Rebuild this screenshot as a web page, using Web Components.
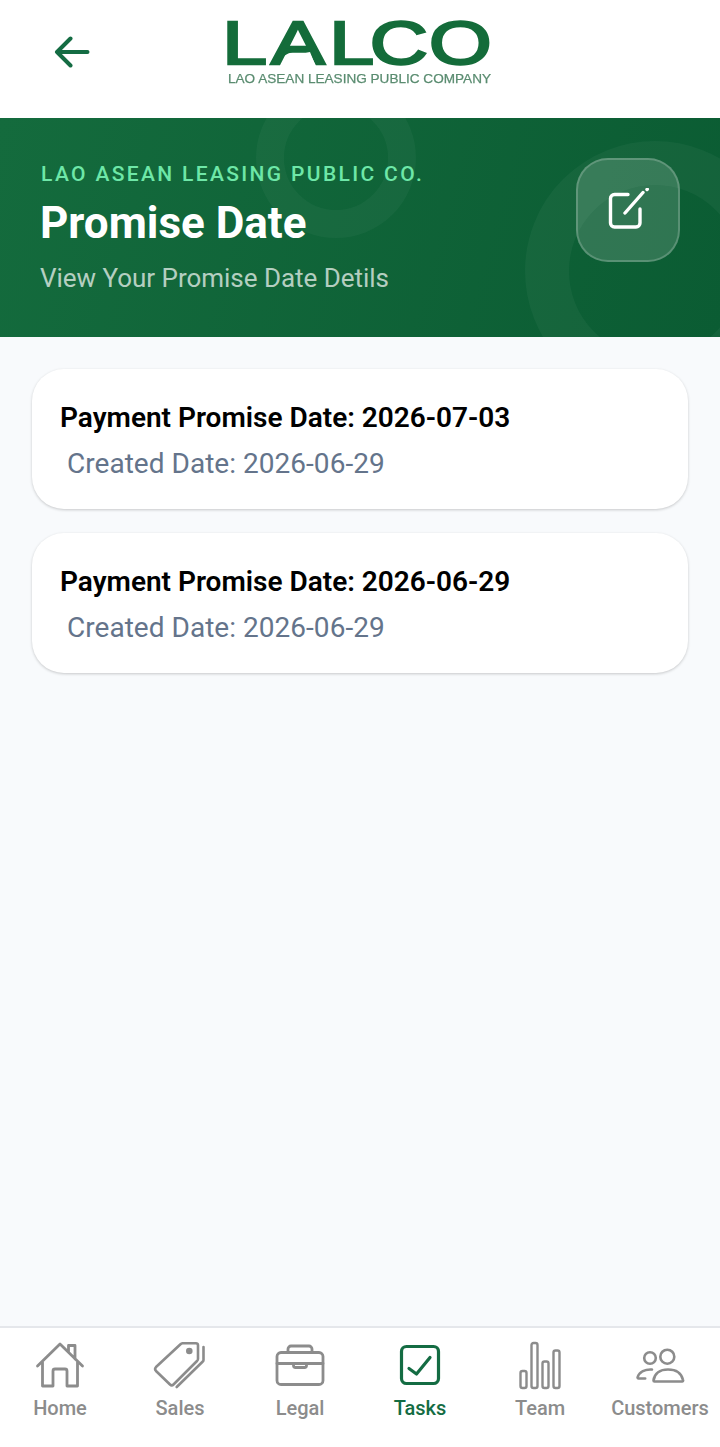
<!DOCTYPE html>
<html lang="en">
<head>
<meta charset="utf-8">
<title>Promise Date</title>
<style>
  html, body { margin: 0; height: 100%; background: #f8fafc; font-family: Roboto, sans-serif; }
  promise-app { height: 1447px; }
</style>
</head>
<body>
<promise-app>
  <top-bar slot="top"></top-bar>
  <promise-hero slot="top" eyebrow="LAO ASEAN LEASING PUBLIC CO." heading="Promise Date" sub="View Your Promise Date Detils"></promise-hero>
  <promise-card promise="2026-07-03" created="2026-06-29"></promise-card>
  <promise-card promise="2026-06-29" created="2026-06-29"></promise-card>
  <bottom-nav slot="bottom"></bottom-nav>
</promise-app>

<script>
(function() {
    class PromiseApp extends HTMLElement {
        constructor() {
            super();
            this.attachShadow({ mode: 'open' }).innerHTML = `
            <style>
                :host { display: flex; flex-direction: column; width: 720px; background: #f8fafc; }
                main {
                    flex: 1;
                    display: flex;
                    flex-direction: column;
                    gap: 24px;
                    padding: 32px;
                }
            </style>
            <slot name="top"></slot>
            <main><slot></slot></main>
            <slot name="bottom"></slot>`;
        }
    }

    class TopBar extends HTMLElement {
        constructor() {
            super();
            this.attachShadow({ mode: 'open' }).innerHTML = `
            <style>
                :host { display: flex; align-items: flex-start; height: 118px; background: #fff; }
                .back { width: 36px; height: 32px; margin: 36px 0 0 54px; flex: none; }
                .logo { width: 300px; height: 110px; margin: 0 0 0 118px; flex: none; filter: blur(.3px); }
            </style>
            <svg class="back" viewBox="0 0 36 32" fill="none" stroke="#146c43" stroke-width="4" stroke-linecap="round" stroke-linejoin="round">
                <path d="M33.500 16H3M16.500 2.500 3 16l13.500 13.500"/>
            </svg>
            <svg class="logo" viewBox="0 0 300 110">
                <g transform="translate(20 0)">
                    <text transform="scale(1.3 1)" y="64" x="-4.500 33 77.800 109 154.600"
                        font-family="Liberation Sans, sans-serif" font-size="62" fill="#146c3a" stroke="#146c3a" stroke-width="2.400">LALCO</text>
                    <path d="M56 67C62 59 70 54 82 52L88 67Z" fill="#fff"/>
                    <path d="M45 64C52 54 64 47 84 48" fill="none" stroke="#146c3a" stroke-width="3.500"/>
                    <text x="0" y="83" textLength="263" lengthAdjust="spacingAndGlyphs"
                        font-family="Liberation Sans, sans-serif" font-size="13" fill="#5a8c70" stroke="#5a8c70" stroke-width=".25">LAO ASEAN LEASING PUBLIC COMPANY</text>
                </g>
            </svg>`;
        }
    }

    class PromiseHero extends HTMLElement {
        constructor() {
            super();
            this.attachShadow({ mode: 'open' }).innerHTML = `
            <style>
                :host {
                    display: flex;
                    position: relative;
                    overflow: hidden;
                    height: 219px;
                    box-sizing: border-box;
                    padding: 40px 40px 0;
                    justify-content: space-between;
                    background: linear-gradient(105deg, #146b3d 0%, #0b5c33 100%);
                }
                .ring { position: absolute; border-radius: 50%; border-style: solid; box-sizing: border-box; }
                .ring.a { width: 160px; height: 160px; left: 256px; top: -40px; border-width: 28px; border-color: rgba(255,255,255,.035); }
                .ring.b { width: 260px; height: 260px; left: 525px; top: 23px; border-width: 44px; border-color: rgba(255,255,255,.04); }
                .text { position: relative; display: flex; flex-direction: column; }
                .eyebrow { font: 500 21px/30px Roboto, sans-serif; letter-spacing: 2.35px; color: #6ee7a8; margin: 1px 0 0 1px; }
                h1 { font: 700 44px/52px Roboto, sans-serif; color: #fff; margin: 8px 0 0; }
                .sub { font: 400 26px/30px Roboto, sans-serif; letter-spacing: -.03px; color: rgba(255,255,255,.7); margin-top: 14px; }
                .action {
                    position: relative;
                    flex: none;
                    display: flex;
                    align-items: center;
                    justify-content: center;
                    box-sizing: border-box;
                    width: 104px;
                    height: 104px;
                    border-radius: 32px;
                    background: rgba(255,255,255,.15);
                    border: 2px solid rgba(255,255,255,.2);
                }
                .action svg { width: 44px; height: 44px; }
            </style>
            <span class="ring a"></span>
            <span class="ring b"></span>
            <div class="text">
                <div class="eyebrow"></div>
                <h1></h1>
                <div class="sub"></div>
            </div>
            <div class="action">
                <svg viewBox="0 0 44 44" fill="none" stroke="#fff" stroke-width="3.400" stroke-linecap="round" stroke-linejoin="round">
                    <path d="M22 6.500H8.500a4 4 0 0 0-4 4V35a4 4 0 0 0 4 4H30a4 4 0 0 0 4-4V21"/>
                    <path d="M19 25 37 4.500M41 1.500l.3-.3"/>
                </svg>
            </div>`;
            this.shadowRoot.querySelector('.eyebrow').textContent = this.getAttribute('eyebrow');
            this.shadowRoot.querySelector('h1').textContent = this.getAttribute('heading');
            this.shadowRoot.querySelector('.sub').textContent = this.getAttribute('sub');
        }
    }

    class PromiseCard extends HTMLElement {
        constructor() {
            super();
            this.attachShadow({ mode: 'open' }).innerHTML = `
            <style>
                :host {
                    display: block;
                    height: 140px;
                    box-sizing: border-box;
                    padding: 32px 28px 0;
                    background: #fff;
                    border-radius: 32px;
                    box-shadow: 0 1px 3px rgba(0,0,0,.2);
                }
                .promise { font: 600 28px/33px Roboto, sans-serif; color: #000; }
                .created { font: 400 28px/33px Roboto, sans-serif; letter-spacing: .03px; color: #64748b; margin: 13px 0 0 7px; }
            </style>
            <div class="promise">Payment Promise Date: ${this.getAttribute('promise')}</div>
            <div class="created">Created Date: ${this.getAttribute('created')}</div>`;
        }
    }

    class NavItem extends HTMLElement {
        constructor() {
            super();
            this.attachShadow({ mode: 'open' }).innerHTML = `
            <style>
                :host {
                    display: flex;
                    flex-direction: column;
                    align-items: center;
                    color: #8c8c8c;
                    font: 500 20px/24px Roboto, sans-serif;
                    white-space: nowrap;
                }
                :host([active]) { color: #146c43; }
                .icon { height: 50px; width: 60px; margin-bottom: 5px; }
            </style>
            <div class="icon"><slot name="icon"></slot></div>
            <slot></slot>`;
        }
    }

    // all icons share a 60x50 box centred on their column
    const icons = {
        home: `<path d="M7.500 25 30 3l22.500 22M12.500 21v24h10.500V30a2 2 0 0 1 2-2h10a2 2 0 0 1 2 2v15h10.500V21M38.500 11V4.500H45V18"/>`,
        sales: `<path d="M6 26 30.500 3.200a4 4 0 0 1 2-1H46a2 2 0 0 1 2 2V18a3 3 0 0 1-1 2L23.500 43.500a2.500 2.500 0 0 1-3.500 0L6 30a3 3 0 0 1 0-4ZM53.500 6v13a2 2 0 0 1-.7 1.500L26.700 46"/><circle cx="39.300" cy="10" r="2" fill="currentColor"/>`,
        legal: `<rect x="7" y="11.500" width="46" height="32" rx="4"/><path d="M18 11.500V8a3 3 0 0 1 3-3h18a3 3 0 0 1 3 3v3.500M7 22.500h46M23.500 22.500v2a2 2 0 0 0 2 2h9a2 2 0 0 0 2-2v-2"/>`,
        tasks: `<rect x="11.500" y="5.500" width="37" height="37" rx="5"/><path d="M19 27.500l7.500 5.500L40 16.500"/>`,
        team: `<rect x="10.500" y="30" width="6" height="17" rx="2"/><rect x="21.500" y="2" width="6" height="45" rx="2"/><rect x="32.500" y="20.500" width="6" height="26.500" rx="2"/><rect x="43.500" y="9.500" width="6" height="37.500" rx="2"/>`,
        customers: `<circle cx="20" cy="17" r="5.800"/><circle cx="37.300" cy="15.700" r="7"/><path d="M22 28.500C15 28 9.500 31 7.700 36a1 1 0 0 0 1 1.500h6.500M23.500 39.500C24.500 32.500 30 28.500 38 28.500S51.500 32.500 53 39a1 1 0 0 1-1 1.500H24.500a1 1 0 0 1-1-1Z"/>`
    };

    const navItems = [
        { label: 'Home', icon: 'home', sw: 2.8 },
        { label: 'Sales', icon: 'sales', sw: 2.6 },
        { label: 'Legal', icon: 'legal', sw: 2.8 },
        { label: 'Tasks', icon: 'tasks', sw: 3.2, active: true },
        { label: 'Team', icon: 'team', sw: 2.4 },
        { label: 'Customers', icon: 'customers', sw: 2.6 }
    ];

    class BottomNav extends HTMLElement {
        constructor() {
            super();
            const items = navItems.map(item => `
                <nav-item ${item.active ? 'active' : ''}>
                    <svg slot="icon" viewBox="0 0 60 50" width="60" height="50" fill="none" stroke="currentColor"
                        stroke-width="${item.sw}" stroke-linecap="round" stroke-linejoin="round"
                        style="display:block">${icons[item.icon]}</svg>
                    ${item.label}
                </nav-item>`).join('');
            this.attachShadow({ mode: 'open' }).innerHTML = `
            <style>
                :host {
                    display: grid;
                    grid-template-columns: repeat(6, 120px);
                    height: 121px;
                    box-sizing: border-box;
                    padding-top: 13px;
                    background: #fff;
                    border-top: 2px solid #e5e7eb;
                }
            </style>
            ${items}`;
        }
    }

    customElements.define('promise-app', PromiseApp);
    customElements.define('top-bar', TopBar);
    customElements.define('promise-hero', PromiseHero);
    customElements.define('promise-card', PromiseCard);
    customElements.define('nav-item', NavItem);
    customElements.define('bottom-nav', BottomNav);
})();
</script>
</body>
</html>
